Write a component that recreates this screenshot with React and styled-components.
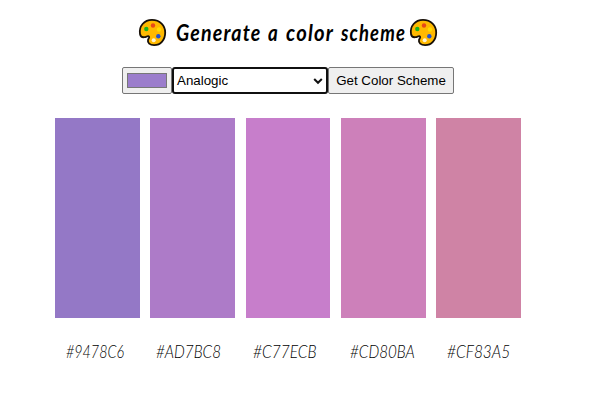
import React from "react";
import styled, { createGlobalStyle } from "styled-components";

const GlobalStyle = createGlobalStyle`
  * { box-sizing: border-box; }
  body { margin: 0; background: #fff; }
`;

const Page = styled.main`
  width: 592px;
  height: 416px;
  overflow: hidden;
  display: flex;
  flex-direction: column;
`;

const Title = styled.h1`
  display: flex;
  align-items: center;
  gap: 9px;
  height: 30px;
  margin: 17px 0 0 138px;
  font: italic 700 23.5px/30px Lato, sans-serif;
  letter-spacing: 1.4px;
  color: #000;
`;

const Word = styled.span`
  width: ${(p) => p.$width}px;
  white-space: nowrap;
  span {
    display: inline-block;
    transform: scaleX(${(p) => p.$scale});
    transform-origin: left center;
  }
`;

const PaletteSvg = styled.svg`
  flex: none;
  width: 29px;
  height: 29px;
  margin-left: ${(p) => (p.$end ? -6 : 0)}px;
`;

const Controls = styled.div`
  display: flex;
  height: 27px;
  margin: 20px 0 0 122px;
`;

const ColorButton = styled.button`
  width: 50px;
  height: 27px;
  padding: 5px 4px;
  border: 1px solid #767676;
  border-radius: 2px;
  background: #efefef;
`;

const Swatch = styled.span`
  display: block;
  height: 15px;
  border: 1px solid #777;
  background: #9b7dcc;
`;

const ModeBox = styled.div`
  display: flex;
  align-items: center;
  justify-content: space-between;
  width: 156px;
  height: 27px;
  padding: 0 3px;
  border: 2px solid #101010;
  border-radius: 3px;
  font: 13.333px "Liberation Sans", Arial, sans-serif;
  color: #000;
`;

const GetButton = styled.button`
  width: 126px;
  height: 27px;
  padding: 0;
  border: 1px solid #767676;
  border-radius: 2px;
  background: #efefef;
  font: 13.333px "Liberation Sans", Arial, sans-serif;
  color: #000;
  white-space: nowrap;
`;

const Scheme = styled.section`
  display: grid;
  grid-template-columns: repeat(5, 84.8px);
  column-gap: 10.5px;
  margin: 24px 0 0 55px;
`;

const Column = styled.div`
  display: flex;
  flex-direction: column;
`;

const ColorBar = styled.div`
  height: 200px;
  background: ${(p) => p.$color};
`;

const HexLabel = styled.p`
  margin: 22px 0 0 ${(p) => p.$inset}px;
  font: italic 300 17px/24px Lato, sans-serif;
  color: #000;
  white-space: nowrap;
  span {
    display: inline-block;
    transform: scaleX(${(p) => p.$scale});
    transform-origin: left center;
  }
`;

const words = [
  { text: "Generate", width: 83, scale: 0.835 },
  { text: "a", width: 9, scale: 0.8 },
  { text: "color", width: 46, scale: 0.86 },
  { text: "scheme", width: 65, scale: 0.785 },
];

const colors = [
  { hex: "#9478C6", inset: 11, scale: 0.84 },
  { hex: "#AD7BC8", inset: 6, scale: 0.895 },
  { hex: "#C77ECB", inset: 7, scale: 0.91 },
  { hex: "#CD80BA", inset: 9, scale: 0.895 },
  { hex: "#CF83A5", inset: 11, scale: 0.91 },
];

function Palette({ end }) {
  return (
    <PaletteSvg $end={end} viewBox="0 0 29 29" aria-hidden="true">
      <path
        d="M2 16C.7 8.2 6.2 1.9 14 1.9c8 0 13.2 5.5 13.2 12.5 0 7.5-4.6 12.7-11.1 12.7-4.3 0-6.8-2.2-6.1-5.2.3-1.3 1.7-2.2 1.1-3.2-.9-1.4-2.5.2-4.7.5-2.2.3-4-1-4.4-3.2z"
        fill="#ffb900"
        stroke="#171008"
        strokeWidth="1.8"
      />
      <circle cx="8.3" cy="11" r="2.2" fill="#1cb21c" />
      <circle cx="15" cy="7.5" r="2.2" fill="#e74819" />
      <circle cx="21" cy="11.5" r="2.2" fill="#ffdc00" />
      <circle cx="20.3" cy="18.2" r="2.2" fill="#2353cf" />
      <circle cx="15.7" cy="22.2" r="2" fill="#fff4d2" />
    </PaletteSvg>
  );
}

export default function App() {
  return (
    <>
      <GlobalStyle />
      <Page>
        <Title>
          <Palette />
          {words.map((w) => (
            <Word key={w.text} $width={w.width} $scale={w.scale}>
              <span>{w.text}</span>
            </Word>
          ))}
          <Palette end />
        </Title>
        <Controls>
          <ColorButton aria-label="Seed color">
            <Swatch />
          </ColorButton>
          <ModeBox>
            Analogic
            <svg width="10" height="8" viewBox="0 0 10 8">
              <path d="M1.2 2 5 5.8 8.8 2" fill="none" stroke="#111" strokeWidth="2" />
            </svg>
          </ModeBox>
          <GetButton>Get Color Scheme</GetButton>
        </Controls>
        <Scheme>
          {colors.map((c) => (
            <Column key={c.hex}>
              <ColorBar $color={c.hex} />
              <HexLabel $inset={c.inset} $scale={c.scale}>
                <span>{c.hex}</span>
              </HexLabel>
            </Column>
          ))}
        </Scheme>
      </Page>
    </>
  );
}
